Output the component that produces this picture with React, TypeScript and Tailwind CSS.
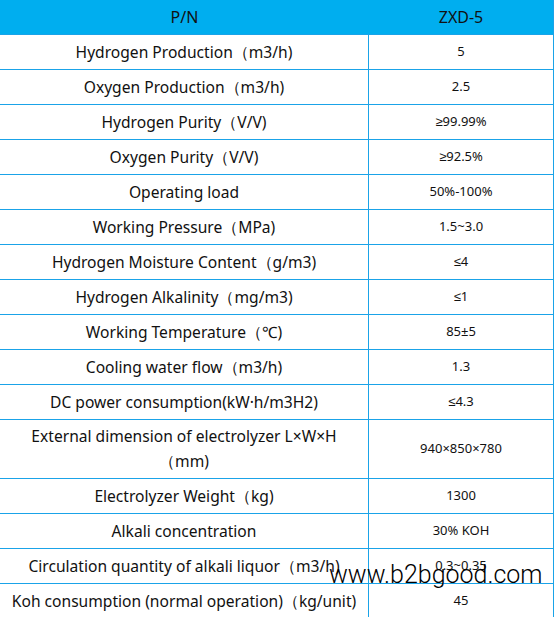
import React from "react"

const rows: { name: React.ReactNode; value: string; tall?: boolean }[] = [
  { name: "Hydrogen Production（m3/h)", value: "5" },
  { name: "Oxygen Production（m3/h)", value: "2.5" },
  { name: "Hydrogen Purity（V/V)", value: "≥99.99%" },
  { name: "Oxygen Purity（V/V)", value: "≥92.5%" },
  { name: "Operating load", value: "50%-100%" },
  { name: "Working Pressure（MPa)", value: "1.5~3.0" },
  { name: "Hydrogen Moisture Content（g/m3)", value: "≤4" },
  { name: "Hydrogen Alkalinity（mg/m3)", value: "≤1" },
  { name: "Working Temperature（℃)", value: "85±5" },
  { name: "Cooling water flow（m3/h)", value: "1.3" },
  { name: "DC power consumption(kW·h/m3H2)", value: "≤4.3" },
  {
    name: (
      <>
        External dimension of electrolyzer L×W×H
        <br />
        （mm)
      </>
    ),
    value: "940×850×780",
    tall: true,
  },
  { name: "Electrolyzer Weight（kg)", value: "1300" },
  { name: "Alkali concentration", value: "30% KOH" },
  { name: "Circulation quantity of alkali liquor（m3/h)", value: "0.3~0.35" },
  { name: "Koh consumption (normal operation)（kg/unit)", value: "45" },
]

const App: React.FC = () => {
  return (
    <div className="relative w-[555px] h-[617px] overflow-hidden bg-white text-[#111] font-['Noto_Sans','Liberation_Sans',sans-serif]">
      <div className="w-[554px] border-r border-[#1aa3e8]">
        <div className="flex h-[34px] bg-[#00aeef] text-[16px] items-center">
          <div className="w-[369px] text-center">P/N</div>
          <div className="flex-1 text-center">ZXD-5</div>
        </div>
        {rows.map((r, i) => (
          <div
            key={i}
            className={`flex border-t border-[#1aa3e8] ${r.tall ? "h-[59px]" : "h-[35px]"}`}
          >
            <div className="w-[369px] border-r border-[#1aa3e8] flex items-center justify-center text-center text-[15.6px] leading-[25px]">
              <span>{r.name}</span>
            </div>
            <div className="flex-1 flex items-center justify-center text-[13px]">
              {r.value}
            </div>
          </div>
        ))}
      </div>
      <div className="absolute left-[329px] top-[556px] text-[25px] font-light text-black font-['Roboto','Liberation_Sans',sans-serif]">
        www.b2bgood.com
      </div>
    </div>
  )
}

export default App
